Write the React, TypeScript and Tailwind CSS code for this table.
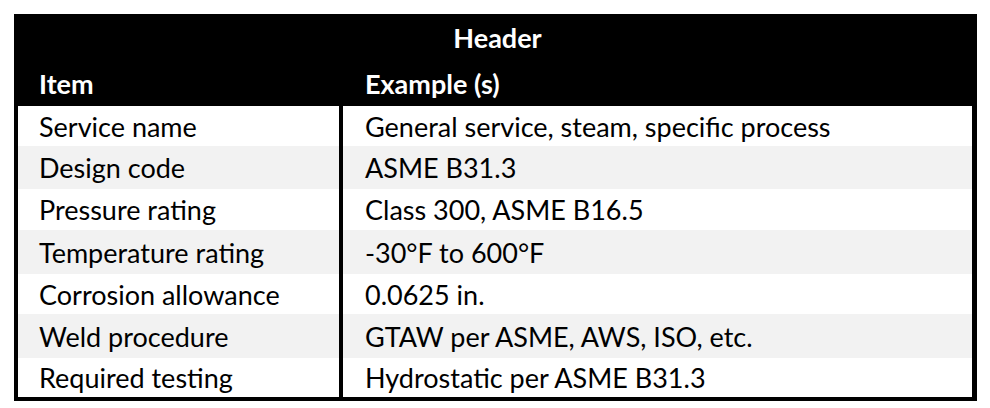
import React from "react";

const rows: { item: string; example: string; h: string; gray: boolean }[] = [
  { item: "Service name", example: "General service, steam, specific process", h: "h-[40px]", gray: false },
  { item: "Design code", example: "ASME B31.3", h: "h-[43px]", gray: true },
  { item: "Pressure rating", example: "Class 300, ASME B16.5", h: "h-[41px]", gray: false },
  { item: "Temperature rating", example: "-30°F to 600°F", h: "h-[44px]", gray: true },
  { item: "Corrosion allowance", example: "0.0625 in.", h: "h-[40px]", gray: false },
  { item: "Weld procedure", example: "GTAW per ASME, AWS, ISO, etc.", h: "h-[44px]", gray: true },
  { item: "Required testing", example: "Hydrostatic per ASME B31.3", h: "h-[39px]", gray: false },
];

export default function App() {
  return (
    <div className="w-[990px] h-[408px] bg-white pt-[14px] pl-[14px] font-['Lato',sans-serif] text-[27px] leading-none text-black">
      <div className="w-[963px] flex flex-col">
        <div className="bg-black text-white font-bold">
          <div className="h-[46px] flex items-center justify-center pl-[4px]">Header</div>
          <div className="h-[46px] flex items-center">
            <div className="w-[329px] pl-[25px]">Item</div>
            <div className="pl-[22px]">Example (s)</div>
          </div>
        </div>
        <div className="border-l-[4px] border-r-[5px] border-b-[4px] border-black flex flex-col">
          {rows.map((r) => (
            <div key={r.item} className={`${r.h} flex ${r.gray ? "bg-[#f2f2f2]" : "bg-white"}`}>
              <div className="w-[321px] pl-[21px] flex items-center">{r.item}</div>
              <div className="w-[4px] bg-black" />
              <div className="flex-1 pl-[22px] flex items-center">{r.example}</div>
            </div>
          ))}
        </div>
      </div>
    </div>
  );
}
